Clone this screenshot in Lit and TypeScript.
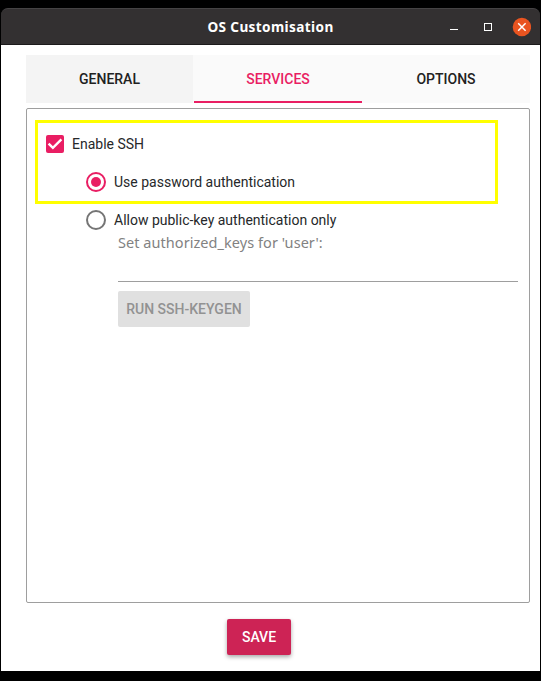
import { LitElement, html, css, svg } from "lit";
import { customElement, state } from "lit/decorators.js";
import { classMap } from "lit/directives/class-map.js";

@customElement("title-bar")
class TitleBar extends LitElement {
  static styles = css`
    :host {
      display: grid;
      grid-template-columns: 1fr auto 1fr;
      align-items: center;
      height: 37px;
      box-sizing: border-box;
      border-top: 1px solid #454344;
      border-bottom: 1px solid #1c1a1b;
      border-radius: 7px 7px 0 0;
      background: #333031;
      color: #fff;
    }
    .title {
      grid-column: 2;
      font: 700 13.6px/18px "Noto Sans", sans-serif;
      letter-spacing: 0.38px;
      white-space: nowrap;
    }
    .controls {
      display: flex;
      justify-content: flex-end;
      padding-right: 9px;
    }
    svg {
      display: block;
    }
  `;
  render() {
    return html`
      <div class="title">OS Customisation</div>
      <div class="controls">
        <svg width="84" height="20" viewBox="0 0 84 20">
          <path d="M3 12.5h8" stroke="#fff" />
          <rect x="37.5" y="6.5" width="7" height="7" fill="none" stroke="#fff" />
          <circle cx="74.9" cy="10" r="9.2" fill="#e95420" />
          <path d="M71.2 6.3l7.4 7.4M78.6 6.3l-7.4 7.4" stroke="#fff" stroke-width="1.5" />
        </svg>
      </div>
    `;
  }
}

@customElement("app-root")
class AppRoot extends LitElement {
  @state() tab = "services";

  static styles = css`
    :host {
      display: block;
      box-sizing: border-box;
      height: 681px;
      padding: 8px 1px 10px;
      background: #000;
      font-family: Roboto, sans-serif;
    }
    .window {
      display: flex;
      flex-direction: column;
      height: 663px;
    }
    .body {
      flex: 1;
      display: flex;
      flex-direction: column;
      padding: 10px 10px 16px 25px;
      background: #fff;
    }
    .tabs {
      display: grid;
      grid-template-columns: repeat(3, 1fr);
      height: 48px;
      background: #fafafa;
    }
    .tab {
      display: flex;
      align-items: center;
      justify-content: center;
      box-sizing: border-box;
      border-top: 2px solid transparent;
      border-bottom: 2px solid transparent;
      font-size: 14px;
      font-weight: 500;
      color: #212121;
    }
    .hover {
      margin-right: 1px;
      background: #f4f4f4;
    }
    .active {
      color: #e91e63;
      border-bottom-color: #e91e63;
    }
    .panel {
      position: relative;
      box-sizing: border-box;
      height: 495px;
      margin-top: 5px;
      padding: 16px 11px 0 9px;
      border: 1px solid #9e9e9e;
      border-radius: 2px;
      font-size: 14px;
      color: #26282a;
    }
    .highlight {
      position: absolute;
      left: 8px;
      top: 11px;
      width: 463px;
      height: 84px;
      box-sizing: border-box;
      border: 3px solid #ff0;
    }
    .row {
      display: flex;
      align-items: center;
      gap: 8px;
      height: 38px;
      padding-left: 50px;
      line-height: 20px;
    }
    .row svg {
      display: block;
      flex: none;
    }
    .check {
      padding-left: 10px;
    }
    .keys {
      padding-left: 82px;
    }
    .label {
      height: 23px;
      margin-top: -8px;
      font: 400 14.5px/22px "Noto Sans", sans-serif;
      letter-spacing: 0.05px;
      color: #828282;
    }
    .field {
      height: 27px;
      border-bottom: 1px solid #9e9e9e;
    }
    .btn {
      display: flex;
      align-items: center;
      justify-content: center;
      height: 36px;
      border-radius: 2px;
      font-size: 14px;
      font-weight: 500;
    }
    .keygen {
      width: 132px;
      margin-top: 9px;
      background: #e0e0e0;
      color: #929292;
    }
    .save {
      width: 64px;
      margin: 16px 0 0 201px;
      background: #cd2355;
      color: #fff;
      box-shadow: 0 2px 4px rgba(0, 0, 0, 0.35);
    }
  `;

  radio(on: boolean) {
    const color = on ? "#e91e63" : "#757575";
    return html`<svg width="20" height="20" viewBox="0 0 20 20">
      <circle cx="10" cy="10" r="9" fill="none" stroke=${color} stroke-width="2" />
      ${on ? svg`<circle cx="10" cy="10" r="5" fill=${color} />` : ""}
    </svg>`;
  }

  render() {
    return html`
      <div class="window">
        <title-bar></title-bar>
        <div class="body">
          <div class="tabs">
            ${["general", "services", "options"].map(
              (t) => html`<div
                class=${classMap({ tab: true, hover: t === "general", active: t === this.tab })}
                @click=${() => (this.tab = t)}
              >${t.toUpperCase()}</div>`
            )}
          </div>
          <div class="panel">
            <div class="row check">
              <svg width="18" height="18" viewBox="0 0 18 18">
                <rect width="18" height="18" rx="2" fill="#e91e63" />
                <path d="M2.6 8.6l4.3 4.3 8.5-8.5" fill="none" stroke="#fff" stroke-width="2.4" />
              </svg>
              <span>Enable SSH</span>
            </div>
            <div class="row">${this.radio(true)}<span>Use password authentication</span></div>
            <div class="row">${this.radio(false)}<span>Allow public-key authentication only</span></div>
            <div class="keys">
              <div class="label">Set authorized_keys for 'user':</div>
              <div class="field"></div>
              <div class="btn keygen">RUN SSH-KEYGEN</div>
            </div>
            <div class="highlight"></div>
          </div>
          <div class="btn save">SAVE</div>
        </div>
      </div>
    `;
  }
}
